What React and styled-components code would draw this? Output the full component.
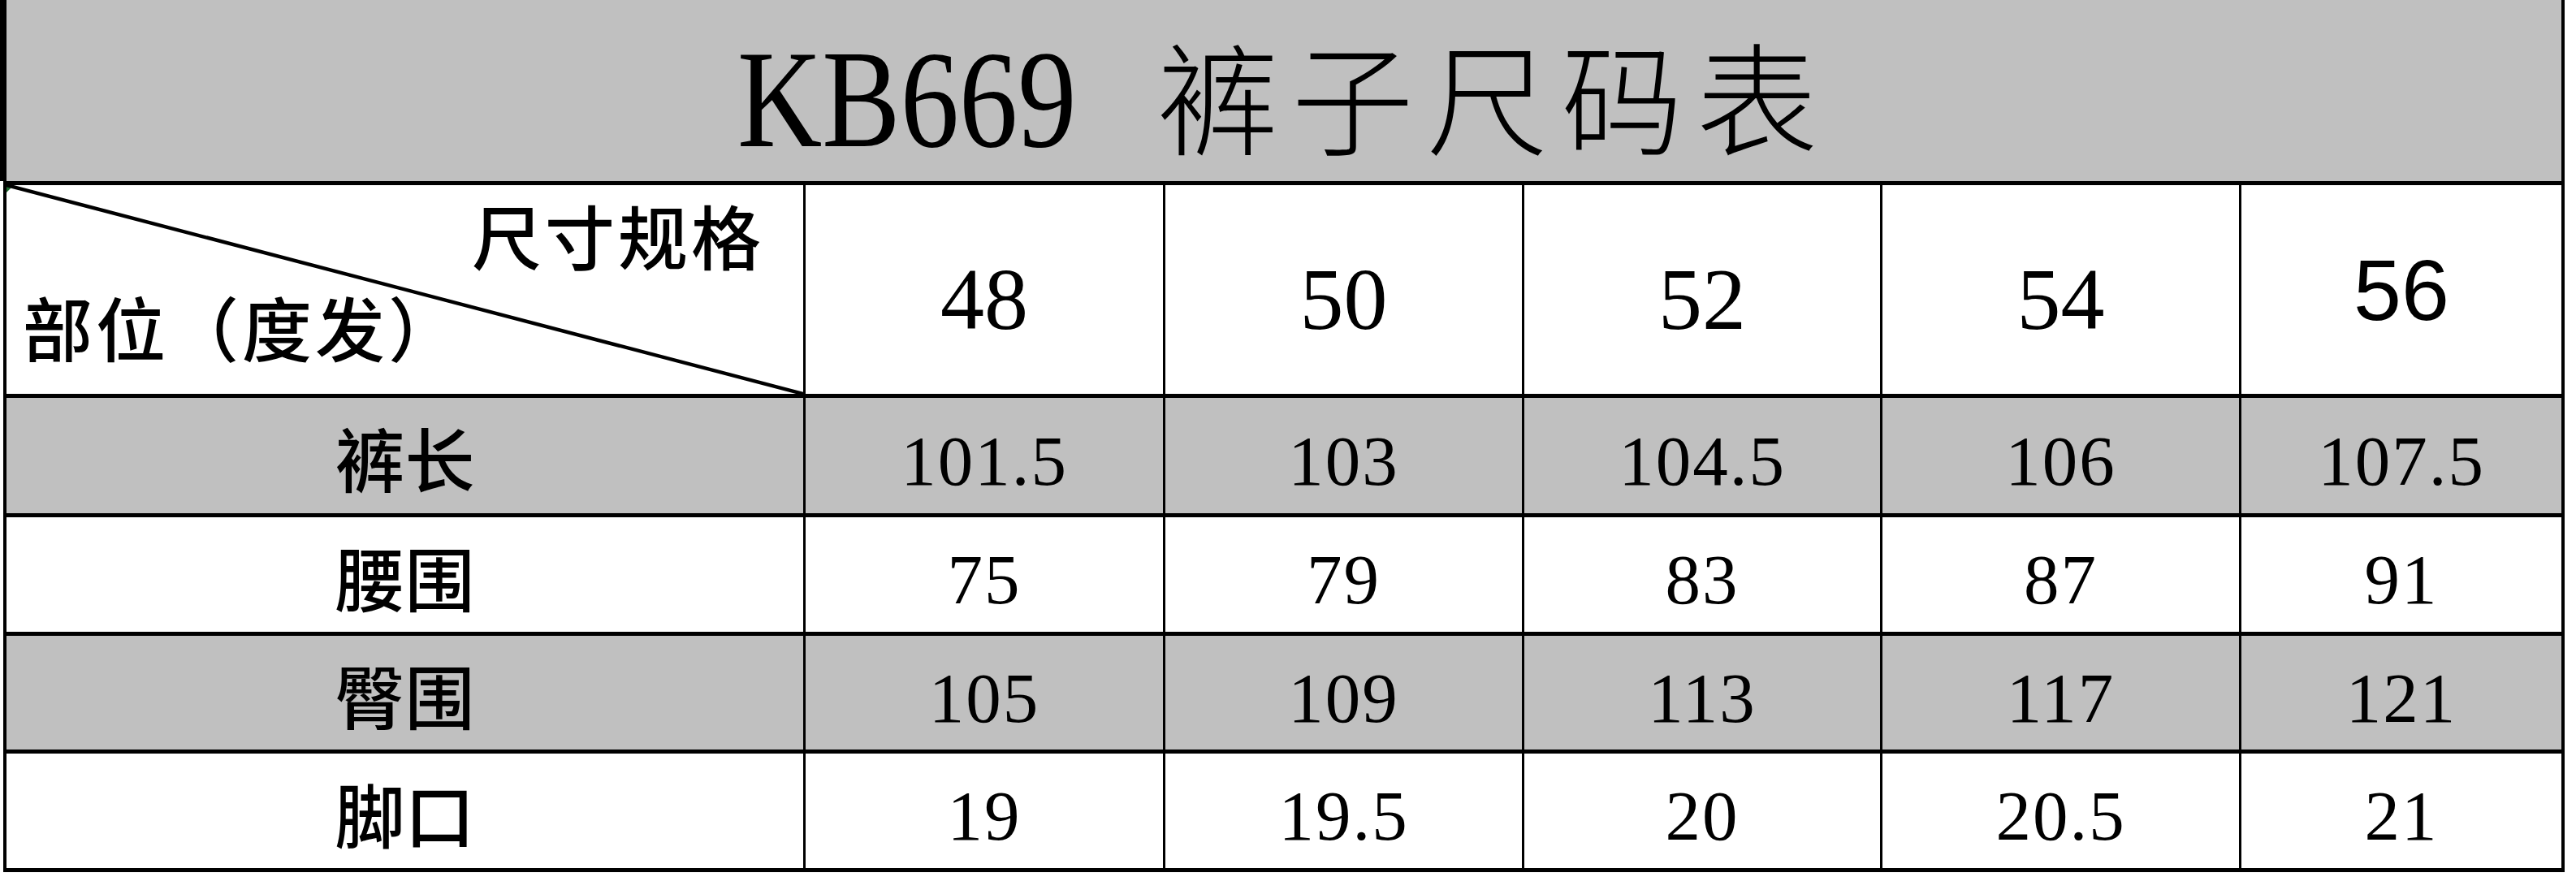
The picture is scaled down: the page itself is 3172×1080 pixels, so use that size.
import React from 'react';
import styled, { createGlobalStyle } from 'styled-components';

const GlobalStyle = createGlobalStyle`
  html, body {
    margin: 0;
    padding: 0;
    background: #fff;
  }
  body {
    font-family: "Liberation Serif", "Noto Sans CJK SC", serif;
    color: #000;
  }
`;

const SIZES = ['48', '50', '52', '54', '56'];

const ROWS = [
  { label: '裤长', values: ['101.5', '103', '104.5', '106', '107.5'], shaded: true },
  { label: '腰围', values: ['75', '79', '83', '87', '91'] },
  { label: '臀围', values: ['105', '109', '113', '117', '121'], shaded: true },
  { label: '脚口', values: ['19', '19.5', '20', '20.5', '21'] },
];

const GRAY = '#c0c0c0';

const Sheet = styled.div`
  width: 3158px;
`;

const TitleBar = styled.div`
  box-sizing: border-box;
  width: 3158px;
  height: 223px;
  background: ${GRAY};
  border-left: 8px solid #000;
  border-right: 4px solid #000;
  display: flex;
  align-items: center;
  justify-content: center;
  padding-top: 20px;
`;

const Title = styled.div`
  line-height: 1;
  white-space: nowrap;
`;

/* the sheet's latin face is narrow, so squeeze Times a little */
const TitleCode = styled.span`
  display: inline-block;
  font-family: "Liberation Serif", serif;
  font-size: 172px;
  transform: scaleX(0.84);
  transform-origin: left center;
  margin-right: -80px;
`;

const TitleName = styled.span`
  font-family: "Noto Sans CJK SC", sans-serif;
  font-size: 150px;
  font-weight: 300;
  letter-spacing: 16px;
  margin-left: 100px;
`;

const Grid = styled.div`
  box-sizing: border-box;
  width: 3154px;
  margin-left: 4px;
  padding: 5px 4px;
  background: #000;
  display: grid;
  grid-template-columns: 981px 440px 439px 438px 439px 394px;
  grid-template-rows: 257px 142px 141px 140px 141px;
  gap: 5px 3px;
`;

const Cell = styled.div`
  background: ${(p) => (p.$shaded ? GRAY : '#fff')};
  display: flex;
  align-items: center;
  justify-content: center;
  line-height: 1;
  white-space: nowrap;
`;

const Corner = styled.div`
  position: relative;
  background: #fff;
  display: flex;
  flex-direction: column;
  justify-content: space-between;
  padding: 18px 48px 40px 20px;
  font-family: "Noto Sans CJK SC", sans-serif;
  font-size: 86px;
  font-weight: 500;
  letter-spacing: 4px;
  line-height: 1;
  white-space: nowrap;

  &::before {
    content: '';
    position: absolute;
    left: 0;
    top: 0;
    width: 0;
    height: 0;
    border-top: 9px solid #1f6b2f;
    border-right: 9px solid transparent;
  }
`;

const CornerText = styled.span`
  align-self: ${(p) => (p.$end ? 'flex-end' : 'flex-start')};
  position: relative;
  z-index: 1;
`;

const Diagonal = styled.svg`
  position: absolute;
  inset: 0;
  width: 100%;
  height: 100%;
`;

const SizeCell = styled(Cell)`
  font-family: ${(p) => (p.$sans ? '"Liberation Sans", sans-serif' : '"Liberation Serif", serif')};
  font-size: ${(p) => (p.$sans ? '106px' : '108px')};
  padding-top: ${(p) => (p.$sans ? '0' : '24px')};
`;

const LabelCell = styled(Cell)`
  font-family: "Noto Sans CJK SC", sans-serif;
  font-size: 86px;
  font-weight: 500;
  padding-top: 4px;
`;

const ValueCell = styled(Cell)`
  font-family: "Liberation Serif", serif;
  font-size: 87px;
  letter-spacing: 2px;
  padding-top: 12px;
`;

export default function App() {
  return (
    <>
      <GlobalStyle />
      <Sheet>
        <TitleBar>
          <Title>
            <TitleCode>KB669</TitleCode>
            <TitleName>裤子尺码表</TitleName>
          </Title>
        </TitleBar>
        <Grid>
          <Corner>
            <Diagonal preserveAspectRatio="none" viewBox="0 0 100 100">
              <line
                x1="0"
                y1="0"
                x2="100"
                y2="100"
                stroke="#000"
                strokeWidth="4.5"
                vectorEffect="non-scaling-stroke"
              />
            </Diagonal>
            <CornerText $end>尺寸规格</CornerText>
            <CornerText>部位（度发）</CornerText>
          </Corner>
          {SIZES.map((s, i) => (
            <SizeCell key={s} $sans={i === SIZES.length - 1}>
              {s}
            </SizeCell>
          ))}
          {ROWS.map((row) => (
            <React.Fragment key={row.label}>
              <LabelCell $shaded={row.shaded}>{row.label}</LabelCell>
              {row.values.map((v, i) => (
                <ValueCell key={i} $shaded={row.shaded}>
                  {v}
                </ValueCell>
              ))}
            </React.Fragment>
          ))}
        </Grid>
      </Sheet>
    </>
  );
}
